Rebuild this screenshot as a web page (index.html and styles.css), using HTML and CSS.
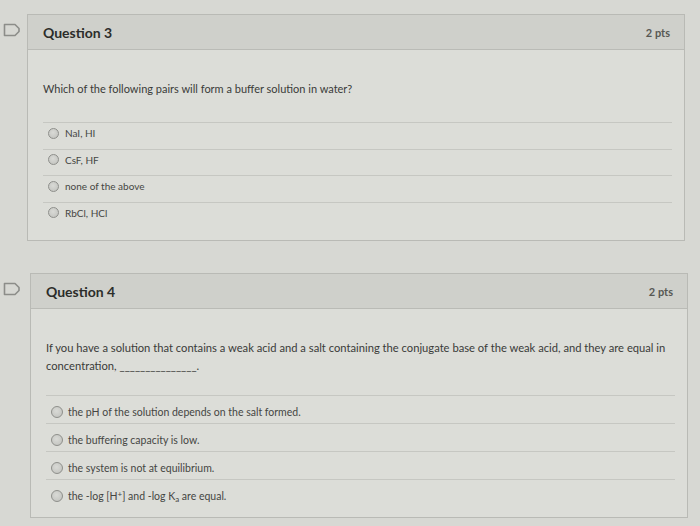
FILE: index.html
```html
<!DOCTYPE html>
<html>
<head>
<meta charset="utf-8">
<link rel="stylesheet" href="styles.css">
</head>
<body>
<div class="page">
  <div class="qrow q3">
    <div class="gutter">
      <svg class="flag" width="18" height="14" viewBox="0 0 18 14"><path d="M1.5 1.5 H12 L16 5.5 V8.5 L12 12.5 H1.5 Z" fill="none" stroke="#8c8d89" stroke-width="1.6" stroke-linejoin="round"/></svg>
    </div>
    <div class="card">
      <div class="head"><span class="title">Question 3</span><span class="pts">2 pts</span></div>
      <div class="body">
        <p class="qtext">Which of the following pairs will form a buffer solution in water?</p>
        <div class="answers">
          <div class="ans"><span class="radio"></span>NaI, HI</div>
          <div class="ans"><span class="radio"></span>CsF, HF</div>
          <div class="ans"><span class="radio"></span>none of the above</div>
          <div class="ans"><span class="radio"></span>RbCl, HCl</div>
        </div>
      </div>
    </div>
  </div>

  <div class="qrow q4">
    <div class="gutter">
      <svg class="flag" width="18" height="14" viewBox="0 0 18 14"><path d="M1.5 1.5 H12 L16 5.5 V8.5 L12 12.5 H1.5 Z" fill="none" stroke="#8c8d89" stroke-width="1.6" stroke-linejoin="round"/></svg>
    </div>
    <div class="card">
      <div class="head"><span class="title">Question 4</span><span class="pts">2 pts</span></div>
      <div class="body">
        <p class="qtext">If you have a solution that contains a weak acid and a salt containing the conjugate base of the weak acid, and they are equal in concentration, _______________.</p>
        <div class="answers">
          <div class="ans"><span class="radio"></span>the pH of the solution depends on the salt formed.</div>
          <div class="ans"><span class="radio"></span>the buffering capacity is low.</div>
          <div class="ans"><span class="radio"></span>the system is not at equilibrium.</div>
          <div class="ans"><span class="radio"></span><span>the -log [H<sup>+</sup>] and -log K<sub>a</sub> are equal.</span></div>
        </div>
      </div>
    </div>
  </div>
</div>
</body>
</html>
```

FILE: styles.css
```css
html, body {
  margin: 0;
  padding: 0;
}
body {
  width: 700px;
  height: 526px;
  overflow: hidden;
  background: #d7d8d3;
  font-family: Lato, "Open Sans", sans-serif;
  color: #3a3b38;
}
.page {
  padding-top: 14px;
  display: flex;
  flex-direction: column;
  gap: 32px;
}
.qrow {
  display: flex;
}
.q3 .gutter { width: 27px; }
.q4 .gutter { width: 30px; }
.gutter {
  display: flex;
  justify-content: flex-start;
}
.flag {
  margin-left: 3px;
  margin-top: 9px;
}
.card {
  width: 656px;
  border: 1px solid #b9bab5;
  background: #dcddd8;
}
.head {
  height: 34px;
  background: #cfd0cb;
  border-bottom: 1px solid #babbb6;
  display: flex;
  align-items: center;
  justify-content: space-between;
  padding: 0 14px 0 15px;
}
.title {
  font-weight: 700;
  font-size: 14px;
  color: #2c2d2a;
}
.pts {
  font-size: 11px;
  font-weight: 700;
  color: #575854;
}
.body {
  padding: 0 12px 0 15px;
}
.qtext {
  margin: 0;
  font-size: 11px;
}
.q3 .qtext {
  padding-top: 31px;
  line-height: 16px;
}
.q4 .qtext {
  padding-top: 30px;
  line-height: 18px;
  font-size: 11.2px;
}
.answers {
  display: flex;
  flex-direction: column;
}
.q3 .answers { margin-top: 25px; padding-bottom: 12px; }
.q4 .answers { margin-top: 20px; padding-bottom: 10px; }
.ans {
  border-top: 1px solid #c6c7c2;
  display: flex;
  align-items: center;
  color: #454643;
}
.q3 .ans {
  font-size: 10px;
  height: 26.5px;
  padding-bottom: 5px;
  box-sizing: border-box;
}
.q4 .ans {
  font-size: 10.5px;
  height: 28px;
  padding-top: 4px;
  box-sizing: border-box;
}
.radio {
  width: 9px;
  height: 9px;
  border-radius: 50%;
  border: 1px solid #8e8f8b;
  background: radial-gradient(circle at 45% 40%, #d9dad6 0%, #bfc0bc 100%);
  margin-left: 5px;
  margin-right: 6px;
  flex: none;
}
.q4 .radio {
  width: 10px;
  height: 10px;
  margin-left: 5px;
  margin-right: 5px;
}
sup, sub {
  font-size: 8px;
  line-height: 0;
}
sup { vertical-align: 3px; }
sub { vertical-align: -2px; }
```
